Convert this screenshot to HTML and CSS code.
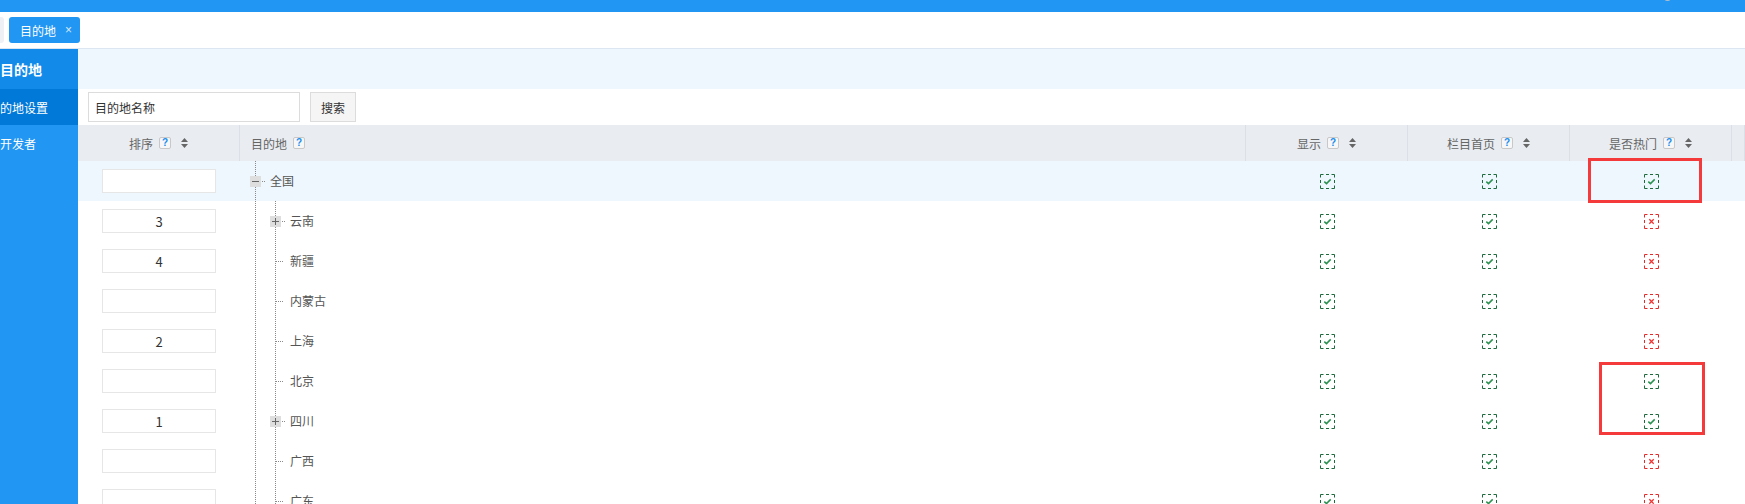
FILE: index.html
```html
<!DOCTYPE html>
<html lang="zh-CN">
<head>
<meta charset="utf-8">
<title>目的地</title>
<link rel="stylesheet" href="styles.css">
</head>
<body>
<div class="topbar"><span class="avatar"></span></div>
<div class="tabbar">
  <span class="tab-prev"></span>
  <span class="tab"><span class="tab-text">目的地</span><span class="tab-close">×</span></span>
</div>
<div class="layout">
  <aside class="sidebar">
    <div class="side-title">目的地</div>
    <div class="side-item active">的地设置</div>
    <div class="side-item">开发者</div>
  </aside>
  <main class="main">
    <div class="crumb"></div>
    <div class="search">
      <input class="search-input" type="text" value="目的地名称">
      <button class="search-btn">搜索</button>
    </div>
    <div class="table">
      <div class="thead">
        <div class="th center">排序<span class="help">?</span><svg class="sort" width="7" height="10" viewBox="0 0 7 10"><path d="M3.5 0L7 4H0z M0 6H7L3.5 10z" fill="#666"/></svg></div>
        <div class="th left">目的地<span class="help">?</span></div>
        <div class="th center">显示<span class="help">?</span><svg class="sort" width="7" height="10" viewBox="0 0 7 10"><path d="M3.5 0L7 4H0z M0 6H7L3.5 10z" fill="#666"/></svg></div>
        <div class="th center">栏目首页<span class="help">?</span><svg class="sort" width="7" height="10" viewBox="0 0 7 10"><path d="M3.5 0L7 4H0z M0 6H7L3.5 10z" fill="#666"/></svg></div>
        <div class="th center">是否热门<span class="help">?</span><svg class="sort" width="7" height="10" viewBox="0 0 7 10"><path d="M3.5 0L7 4H0z M0 6H7L3.5 10z" fill="#666"/></svg></div>
        <div class="th"></div>
      </div>
      <div id="tbody"></div>
    </div>
  </main>
</div>
<div class="mark mark1"></div>
<div class="mark mark2"></div>
<script>
var rows = [
  {n:"全国", lv:0, t:"minus", o:"", c:[1,1,1], hl:true},
  {n:"云南", lv:1, t:"plus", o:"3", c:[1,1,0]},
  {n:"新疆", lv:1, o:"4", c:[1,1,0]},
  {n:"内蒙古", lv:1, o:"", c:[1,1,0]},
  {n:"上海", lv:1, o:"2", c:[1,1,0]},
  {n:"北京", lv:1, o:"", c:[1,1,1]},
  {n:"四川", lv:1, t:"plus", o:"1", c:[1,1,1]},
  {n:"广西", lv:1, o:"", c:[1,1,0]},
  {n:"广东", lv:1, o:"", c:[1,1,0]}
];
var ok = '<svg class="chk" width="15" height="15" viewBox="0 0 15 15"><rect x="0.5" y="0.5" width="14" height="14" fill="none" stroke="#1d6b3c" stroke-dasharray="3 2.5 3 2.5 3 0"/><path d="M4.3 7.6L6.5 9.6L10.7 5.4" fill="none" stroke="#2b9150" stroke-width="1.5"/></svg>';
var no = '<svg class="chk" width="15" height="15" viewBox="0 0 15 15"><rect x="0.5" y="0.5" width="14" height="14" fill="none" stroke="#e32b2b" stroke-dasharray="3 2.5 3 2.5 3 0"/><path d="M5.3 5.3L9.7 9.7M9.7 5.3L5.3 9.7" fill="none" stroke="#ee3333" stroke-width="1.3"/></svg>';
var minus = '<svg class="toggle" width="11" height="11" viewBox="0 0 11 11"><rect width="11" height="11" fill="#dedede"/><path d="M2 5.5H9" stroke="#666" stroke-width="1"/></svg>';
var plus = '<svg class="toggle" width="11" height="11" viewBox="0 0 11 11"><rect width="11" height="11" fill="#dedede"/><path d="M2 5.5H9M5.5 2V9" stroke="#666" stroke-width="1"/></svg>';
var html = "";
rows.forEach(function(r){
  var tree;
  if (r.t) {
    tree = '<div class="td tree lv' + r.lv + ' node">' + (r.t === "minus" ? minus : plus) + '<span class="conn short"></span><span class="label">' + r.n + '</span></div>';
  } else {
    tree = '<div class="td tree lv' + r.lv + ' leaf"><span class="conn"></span><span class="label">' + r.n + '</span></div>';
  }
  html += '<div class="tr' + (r.hl ? ' hl' : '') + '">' +
    '<div class="td center"><input class="order" type="text" value="' + r.o + '"></div>' +
    tree +
    r.c.map(function(v){ return '<div class="td center">' + (v ? ok : no) + '</div>'; }).join("") +
    '<div class="td"></div></div>';
});
document.getElementById("tbody").innerHTML = html;
</script>
</body>
</html>
```

FILE: styles.css
```css
* { box-sizing: border-box; }

html, body {
  margin: 0;
  padding: 0;
}

body {
  width: 1745px;
  height: 504px;
  overflow: hidden;
  position: relative;
  font-family: "Noto Sans CJK SC", "Noto Sans", sans-serif;
  font-size: 12px;
  color: #555;
  background: #fff;
}

.topbar {
  height: 12px;
  background: #2196f3;
  position: relative;
}

.avatar {
  position: absolute;
  left: 1663px;
  top: -8px;
  width: 9px;
  height: 9px;
  border-radius: 50%;
  background: #b9c0c9;
}

.tabbar {
  height: 37px;
  border-bottom: 1px solid #dce6f2;
  display: flex;
  align-items: center;
  gap: 5px;
  background: #fff;
}

.tab-prev {
  width: 4px;
  height: 26px;
  background: #edf0f5;
  border-radius: 0 3px 3px 0;
}

.tab {
  width: 71px;
  height: 26px;
  background: #2196f3;
  border-radius: 3px;
  color: #fff;
  display: flex;
  align-items: center;
  padding-left: 11px;
}

.tab-text {
  font-size: 12px;
}

.tab-close {
  margin-left: 9px;
  font-family: "Liberation Sans", sans-serif;
  font-size: 12px;
  color: #d6eafc;
}

.layout {
  display: flex;
  height: 455px;
}

.sidebar {
  width: 78px;
  flex-shrink: 0;
  background: #2196f3;
  color: #fff;
  overflow: hidden;
}

.side-title {
  height: 40px;
  background: #118aea;
  display: flex;
  align-items: center;
  font-size: 14px;
  font-weight: bold;
  white-space: nowrap;
}

.side-item {
  height: 36px;
  display: flex;
  align-items: center;
  font-size: 12px;
  white-space: nowrap;
}

.side-item.active {
  background: #0079d8;
}

.main {
  flex: 1;
  overflow: hidden;
}

.crumb {
  height: 40px;
  background: #eef6fe;
}

.search {
  height: 36px;
  display: flex;
  align-items: center;
  gap: 10px;
  padding-left: 10px;
}

.search-input {
  width: 212px;
  height: 30px;
  border: 1px solid #dcdcdc;
  padding: 0 6px;
  font-family: inherit;
  font-size: 12px;
  color: #333;
  outline: none;
}

.search-btn {
  width: 46px;
  height: 30px;
  border: 1px solid #dcdcdc;
  background: #f5f5f5;
  font-family: inherit;
  font-size: 12px;
  color: #333;
  padding: 0;
}

.thead,
.tr {
  display: grid;
  grid-template-columns: 162px 1006px 162px 162px 162px 1fr;
}

.thead {
  height: 36px;
  background: #e9ecf1;
}

.th {
  border-right: 1px solid #dce0e6;
  display: flex;
  align-items: center;
  color: #666;
  font-size: 12px;
}

.th.center {
  justify-content: center;
}

.th.left {
  padding-left: 11px;
}

.help {
  width: 12px;
  height: 12px;
  margin-left: 6px;
  border: 1px solid #c8c8c8;
  border-radius: 2px;
  background: #f7f7f7;
  color: #1a8cf0;
  font-family: "Liberation Sans", sans-serif;
  font-weight: bold;
  font-size: 10px;
  line-height: 10px;
  display: flex;
  align-items: center;
  justify-content: center;
}

.sort {
  margin-left: 10px;
  display: block;
}

.tr {
  height: 40px;
}

.tr.hl {
  background: #eef6fe;
}

.td {
  display: flex;
  align-items: center;
}

.td.center {
  justify-content: center;
}

.order {
  width: 114px;
  height: 24px;
  border: 1px solid #e6e6e6;
  background: #fff;
  text-align: center;
  font-family: "Noto Sans CJK SC", "Noto Sans", sans-serif;
  font-size: 13px;
  color: #333;
  outline: none;
  padding: 0;
}

.tree {
  background-repeat: repeat-y;
  color: #555;
}

.tree.lv0 {
  padding-left: 10px;
  background-image: linear-gradient(to bottom, #8a8a8a 50%, transparent 50%);
  background-size: 1px 2px;
  background-position: 15px 0;
}

.tree.lv1 {
  background-image:
    linear-gradient(to bottom, #8a8a8a 50%, transparent 50%),
    linear-gradient(to bottom, #8a8a8a 50%, transparent 50%);
  background-size: 1px 2px, 1px 2px;
  background-position: 15px 0, 35px 0;
}

.tree.lv1.node {
  padding-left: 30px;
}

.tree.lv1.leaf {
  padding-left: 36px;
}

.toggle {
  display: block;
  flex-shrink: 0;
}

.conn {
  width: 8px;
  height: 1px;
  background-image: linear-gradient(to right, #8a8a8a 50%, transparent 50%);
  background-size: 2px 1px;
  background-repeat: repeat-x;
}

.conn.short {
  width: 4px;
  margin-left: 1px;
}

.label {
  margin-left: 6px;
  line-height: 1;
  padding-bottom: 1px;
}

.node .label {
  margin-left: 4px;
}

.chk {
  display: block;
}

.mark {
  position: absolute;
  border: 3px solid #f43a3a;
}

.mark1 {
  left: 1588px;
  top: 158px;
  width: 114px;
  height: 45px;
}

.mark2 {
  left: 1599px;
  top: 362px;
  width: 106px;
  height: 73px;
}
```
